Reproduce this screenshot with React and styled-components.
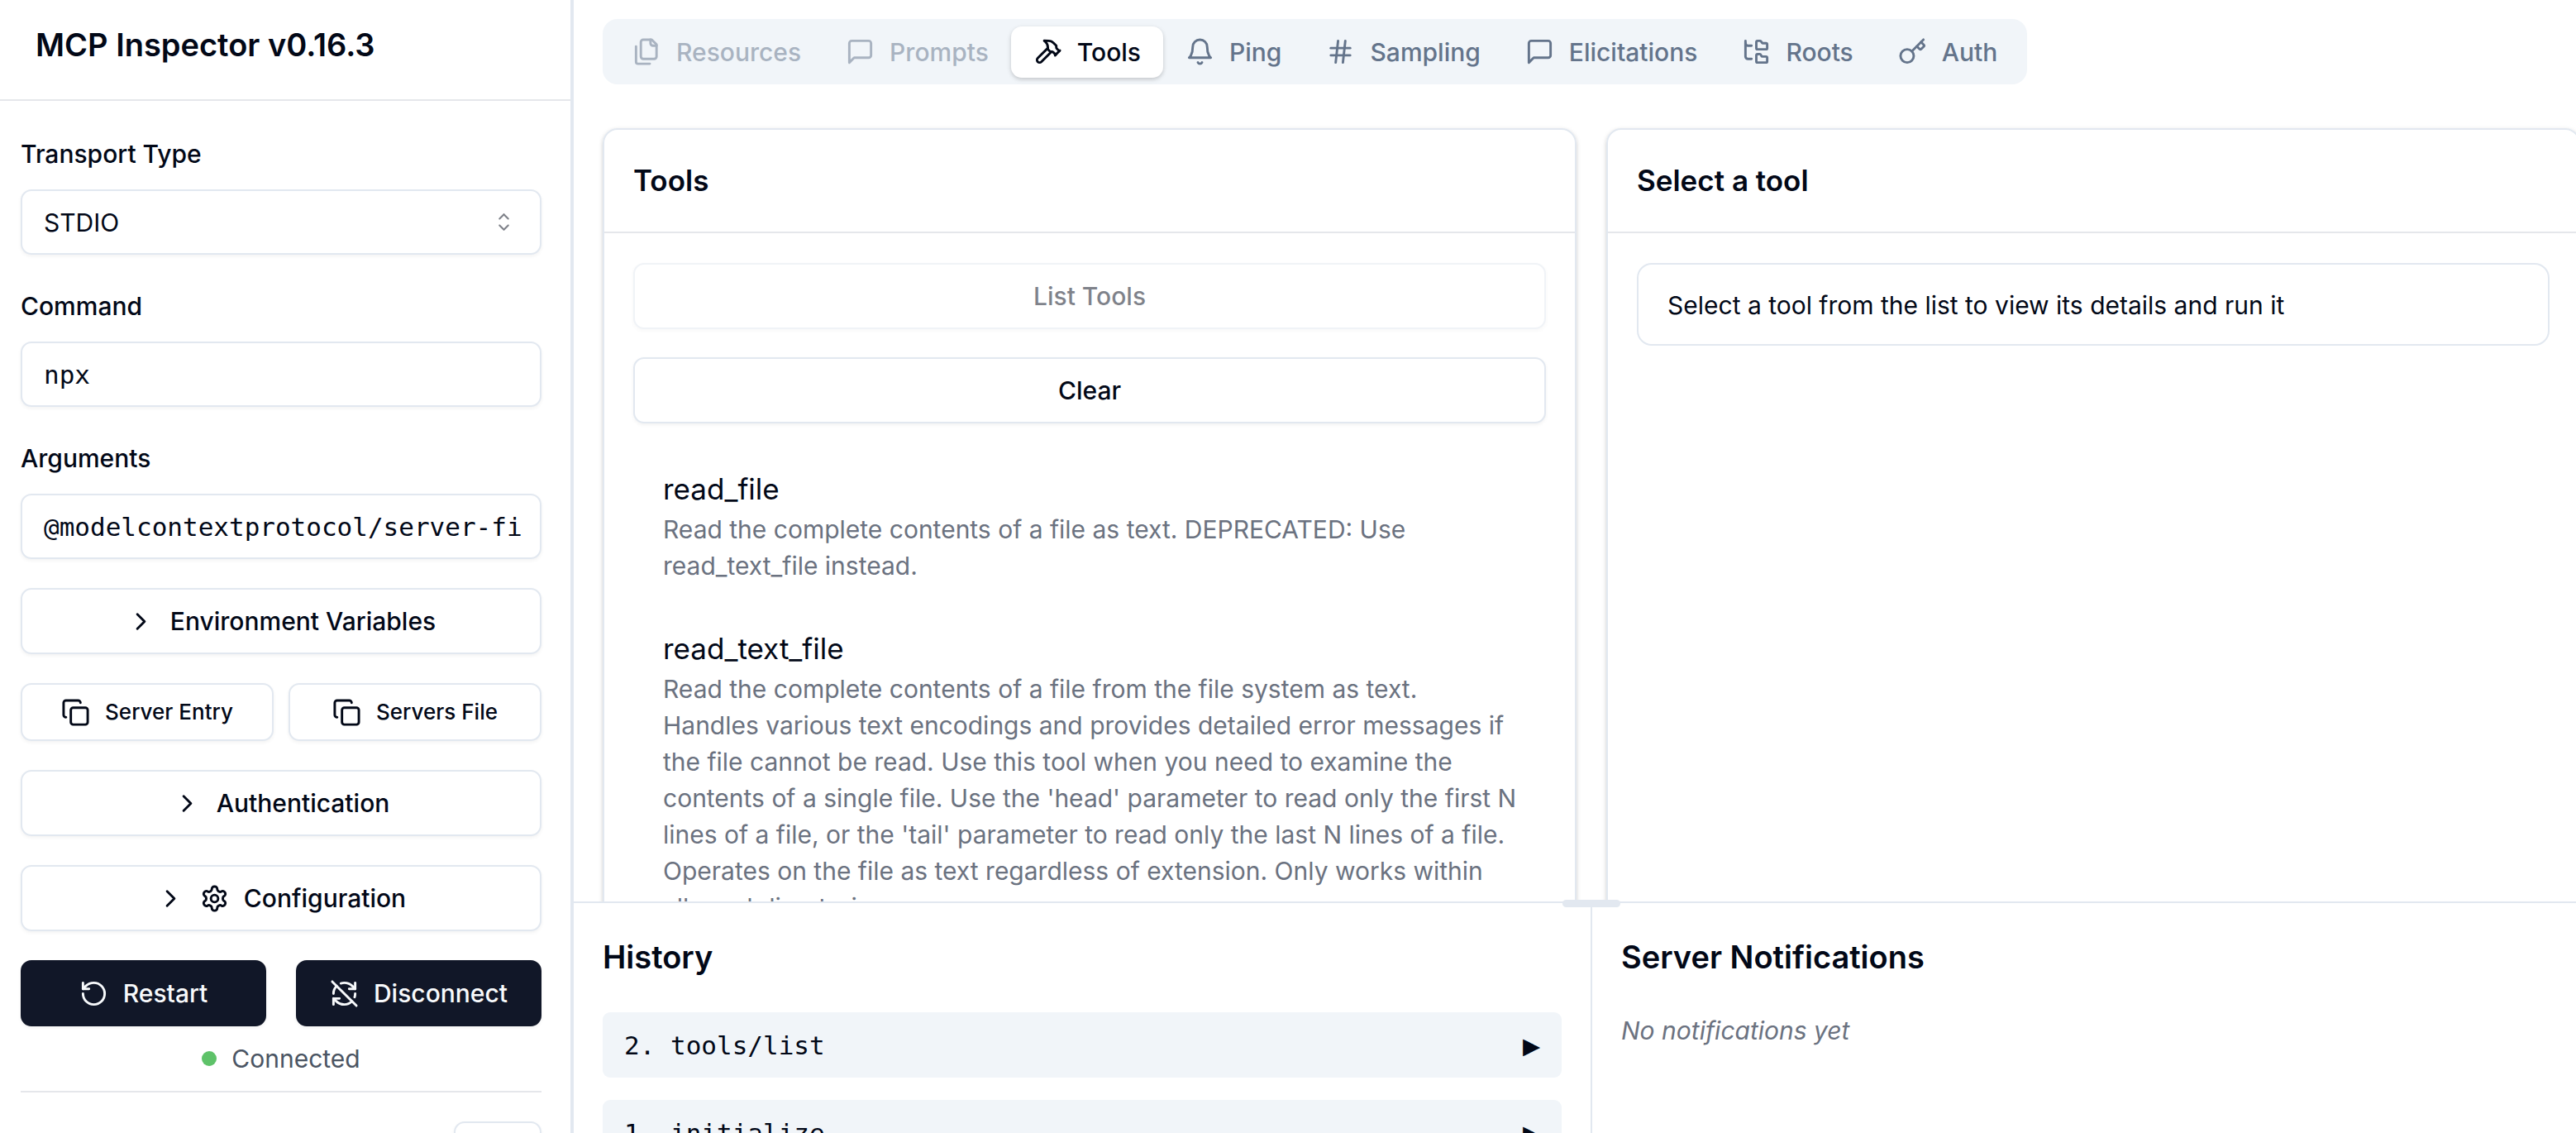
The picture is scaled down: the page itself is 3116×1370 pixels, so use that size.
import React from "react";
import styled, { createGlobalStyle } from "styled-components";

const sans = `Inter, "Liberation Sans", sans-serif`;
const mono = `"DejaVu Sans Mono", "Liberation Mono", monospace`;

const color = {
  ink: "#020817",
  line: "#e2e8f0",
  divider: "#e5e7eb",
  muted: "#64748b",
  gray: "#6b7280",
  soft: "#f1f5f9",
  primary: "#111728",
};

const Global = createGlobalStyle`
  *, *::before, *::after { box-sizing: border-box; }
  body {
    margin: 0;
    background: #fff;
    color: ${color.ink};
    font-family: ${sans};
    font-size: 30px;
    line-height: 44px;
    overflow: hidden;
  }
  h1, h2, h3, p, ul, ol { margin: 0; padding: 0; }
  ul, ol { list-style: none; }
  button, input, select { font: inherit; color: inherit; margin: 0; }
`;

const Page = styled.div`
  display: flex;
  height: 100vh;
  overflow: hidden;
`;

const Sidebar = styled.aside`
  flex: 0 0 694px;
  display: flex;
  flex-direction: column;
  border-right: 4px solid ${color.line};
  overflow: hidden;
`;

const SidebarHeader = styled.header`
  flex: none;
  height: 122px;
  padding: 24px 43px 0;
  border-bottom: 2px solid ${color.divider};
`;

const AppTitle = styled.h1`
  font-size: 38px;
  line-height: 61px;
  font-weight: 600;
`;

const SidebarBody = styled.div`
  flex: none;
  display: flex;
  flex-direction: column;
  gap: 35px;
  padding: 37px 35px 0 25px;
`;

const Field = styled.div`
  display: flex;
  flex-direction: column;
  gap: 15px;
`;

const Label = styled.label`
  font-size: 30px;
  line-height: 55px;
  font-weight: 500;
`;

const boxed = `
  background: #fff;
  border: 2px solid ${color.line};
  border-radius: 13px;
  box-shadow: 0 2px 4px rgba(0, 0, 0, 0.05);
`;

const TextInput = styled.input`
  ${boxed}
  width: 100%;
  height: 79px;
  padding: 0 20px 0 26px;
  font-family: ${mono};
  font-size: 31px;
`;

const SelectWrap = styled.div`
  display: grid;
  align-items: center;
  > * { grid-area: 1 / 1; }
  svg { justify-self: end; margin-right: 28px; opacity: 0.5; pointer-events: none; }
`;

const Select = styled.select`
  ${boxed}
  appearance: none;
  width: 100%;
  height: 79px;
  padding: 0 26px;
`;

const Button = styled.button`
  ${boxed}
  display: inline-flex;
  align-items: center;
  justify-content: center;
  gap: 18px;
  width: ${(p) => (p.$icon ? "106px" : "100%")};
  height: ${(p) => (p.$small ? "70px" : "80px")};
  padding: 0;
  font-size: ${(p) => (p.$small ? "26px" : "30px")};
  font-weight: 500;
  white-space: nowrap;
  ${(p) => p.$primary && `
    background: ${color.primary};
    border-color: ${color.primary};
    color: #f8fafc;
  `}
  &:disabled { opacity: 0.5; }
`;

const ButtonRow = styled.div`
  display: grid;
  grid-template-columns: 1fr 1fr;
  gap: ${(p) => (p.$tight ? "18px" : "36px")};
`;

const Actions = styled.div`
  display: flex;
  flex-direction: column;
  gap: 17px;
`;

const Status = styled.div`
  display: flex;
  align-items: center;
  justify-content: center;
  gap: 18px;
  color: #4b5563;
`;

const Dot = styled.span`
  width: 18px;
  height: 18px;
  border-radius: 50%;
  background: #5ec269;
`;

const SidebarFooter = styled.footer`
  display: flex;
  justify-content: flex-end;
  margin-top: -18px;
  padding-top: 35px;
  border-top: 2px solid ${color.divider};
`;

const Main = styled.main`
  flex: 1;
  min-width: 0;
  display: flex;
  flex-direction: column;
`;

const Workspace = styled.div`
  flex: 1;
  min-height: 0;
  overflow: hidden;
  padding: 23px 0 0 35px;
`;

const Tabs = styled.div`
  display: inline-flex;
  align-items: center;
  height: 79px;
  padding: 0 9px;
  border-radius: 18px;
  background: ${color.soft};
  color: ${color.muted};
`;

const Tab = styled.button`
  display: inline-flex;
  align-items: center;
  gap: 18px;
  height: 62px;
  padding: 0 27px;
  border: 0;
  border-radius: 13px;
  background: ${(p) => (p.$active ? "#fff" : "transparent")};
  color: ${(p) => (p.$active ? color.ink : "inherit")};
  box-shadow: ${(p) => (p.$active ? "0 2px 6px rgba(0, 0, 0, 0.1), 0 2px 4px rgba(0, 0, 0, 0.1)" : "none")};
  font-size: 30px;
  font-weight: 500;
  &:disabled { opacity: 0.5; }
`;

const Cards = styled.div`
  display: grid;
  grid-template-columns: 1fr 1fr;
  align-items: start;
  gap: 36px;
  width: calc(100% + 5px);
  margin-top: 53px;
`;

const Card = styled.section`
  min-height: 100vh;
  border: 2px solid ${color.line};
  border-radius: 18px;
  box-shadow: 0 2px 6px rgba(0, 0, 0, 0.1), 0 2px 4px rgba(0, 0, 0, 0.1);
`;

const CardHeader = styled.div`
  padding: 35px;
  border-bottom: 2px solid ${color.divider};
`;

const CardTitle = styled.h3`
  font-size: 35px;
  line-height: 53px;
  font-weight: 600;
`;

const CardBody = styled.div`
  display: flex;
  flex-direction: column;
  gap: 34px;
  padding: 36px 35px;
`;

const ToolList = styled.ul`
  display: flex;
  flex-direction: column;
  gap: 18px;
`;

const Tool = styled.li`
  padding: 18px 34px 15px 36px;
`;

const ToolName = styled.div`
  font-size: 35px;
  line-height: 54px;
`;

const ToolText = styled.p`
  color: ${color.gray};
`;

const Notice = styled.div`
  padding: 27px 35px 25px;
  border: 2px solid ${color.line};
  border-radius: 18px;
`;

const Bottom = styled.div`
  position: relative;
  flex: none;
  display: grid;
  grid-template-columns: 1232px 1fr;
  height: 280px;
  border-top: 2px solid ${color.line};
`;

const Grip = styled.div`
  position: absolute;
  top: -4px;
  left: 50%;
  width: 70px;
  height: 9px;
  margin-left: -15px;
  border-radius: 5px;
  background: ${color.line};
`;

const Panel = styled.section`
  overflow: hidden;
  padding: 35px;
  border-right: ${(p) => (p.$divided ? `2px solid ${color.line}` : "0")};
`;

const PanelTitle = styled.h2`
  margin-bottom: 36px;
  font-size: 38px;
  line-height: 61px;
  font-weight: 600;
`;

const HistoryList = styled.ul`
  display: flex;
  flex-direction: column;
  gap: 27px;
`;

const HistoryItem = styled.li`
  display: flex;
  align-items: center;
  justify-content: space-between;
  height: 79px;
  padding: 0 26px;
  border-radius: 9px;
  background: ${color.soft};
  font-family: ${mono};
  font-size: 31px;
`;

const Arrow = styled.span`
  font-size: 35px;
`;

const Empty = styled.p`
  color: ${color.gray};
  font-style: italic;
`;

const Svg = styled.svg`
  flex: none;
  width: 35px;
  height: 35px;
`;

const paths = {
  chevron: ["m9 18 6-6-6-6"],
  restart: ["M3 12a9 9 0 1 0 9-9 9.75 9.75 0 0 0-6.74 2.74L3 8", "M3 3v5h5"],
  refreshOff: [
    "M21 8L18.74 5.74A9.75 9.75 0 0 0 12 3C11 3 10.03 3.16 9.13 3.47",
    "M8 16H3v5",
    "M3 12C3 9.51 4 7.26 5.64 5.64",
    "m3 16 2.26 2.26A9.75 9.75 0 0 0 12 21c2.49 0 4.74-1 6.36-2.64",
    "M21 12c0 1-.16 1.97-.47 2.87",
    "M21 3v5h-5",
    "M22 22 2 2",
  ],
  gear: [
    "M12.22 2h-.44a2 2 0 0 0-2 2v.18a2 2 0 0 1-1 1.73l-.43.25a2 2 0 0 1-2 0l-.15-.08a2 2 0 0 0-2.73.73l-.22.38a2 2 0 0 0 .73 2.73l.15.1a2 2 0 0 1 1 1.72v.51a2 2 0 0 1-1 1.74l-.15.09a2 2 0 0 0-.73 2.73l.22.38a2 2 0 0 0 2.73.73l.15-.08a2 2 0 0 1 2 0l.43.25a2 2 0 0 1 1 1.73V20a2 2 0 0 0 2 2h.44a2 2 0 0 0 2-2v-.18a2 2 0 0 1 1-1.73l.43-.25a2 2 0 0 1 2 0l.15.08a2 2 0 0 0 2.73-.73l.22-.39a2 2 0 0 0-.73-2.73l-.15-.08a2 2 0 0 1-1-1.74v-.5a2 2 0 0 1 1-1.74l.15-.09a2 2 0 0 0 .73-2.73l-.22-.38a2 2 0 0 0-2.73-.73l-.15.08a2 2 0 0 1-2 0l-.43-.25a2 2 0 0 1-1-1.73V4a2 2 0 0 0-2-2z",
    "M15 12a3 3 0 1 1-6 0a3 3 0 1 1 6 0",
  ],
  copy: [
    "M10 8h10a2 2 0 0 1 2 2v10a2 2 0 0 1-2 2H10a2 2 0 0 1-2-2V10a2 2 0 0 1 2-2z",
    "M4 16c-1.1 0-2-.9-2-2V4c0-1.1.9-2 2-2h10c1.1 0 2 .9 2 2",
  ],
  files: [
    "M20 7h-3a2 2 0 0 1-2-2V2",
    "M9 18a2 2 0 0 1-2-2V4a2 2 0 0 1 2-2h7l4 4v10a2 2 0 0 1-2 2Z",
    "M3 7.6v12.8A1.6 1.6 0 0 0 4.6 22h9.8",
  ],
  message: ["M21 15a2 2 0 0 1-2 2H7l-4 4V5a2 2 0 0 1 2-2h14a2 2 0 0 1 2 2z"],
  hammer: [
    "m15 12-8.373 8.373a1 1 0 1 1-3-3L12 9",
    "m18 15 4-4",
    "m21.5 11.5-1.914-1.914A2 2 0 0 1 19 8.172V7l-2.26-2.26a6 6 0 0 0-4.202-1.756L9 2.96l.92.82A6.18 6.18 0 0 1 12 8.4V10l2 2h1.172a2 2 0 0 1 1.414.586L18.5 14.5",
  ],
  bell: ["M6 8a6 6 0 0 1 12 0c0 7 3 9 3 9H3s3-2 3-9", "M10.3 21a1.94 1.94 0 0 0 3.4 0"],
  hash: ["M4 9h16", "M4 15h16", "M10 3 8 21", "M16 3l-2 18"],
  tree: [
    "M20 10a1 1 0 0 0 1-1V6a1 1 0 0 0-1-1h-2.5a1 1 0 0 1-.8-.4l-.9-1.2A1 1 0 0 0 15 3h-2a1 1 0 0 0-1 1v5a1 1 0 0 0 1 1Z",
    "M20 21a1 1 0 0 0 1-1v-3a1 1 0 0 0-1-1h-2.9a1 1 0 0 1-.88-.55l-.42-.85a1 1 0 0 0-.92-.6H13a1 1 0 0 0-1 1v5a1 1 0 0 0 1 1Z",
    "M3 5a2 2 0 0 0 2 2h3",
    "M3 3v13a2 2 0 0 0 2 2h3",
  ],
  key: [
    "m15.5 7.5 2.3 2.3a1 1 0 0 0 1.4 0l2.1-2.1a1 1 0 0 0 0-1.4L19 4",
    "m21 2-9.6 9.6",
    "M13 15.5a5.5 5.5 0 1 1-11 0a5.5 5.5 0 1 1 11 0",
  ],
};

const Icon = ({ name }) => (
  <Svg viewBox="0 0 24 24" fill="none" stroke="currentColor" strokeWidth="2" strokeLinecap="round" strokeLinejoin="round" aria-hidden="true">
    {paths[name].map((d) => <path key={d} d={d} />)}
  </Svg>
);

const CaretSort = () => (
  <Svg viewBox="0 0 15 15" fill="none" aria-hidden="true">
    <path
      fill="currentColor"
      fillRule="evenodd"
      d="M4.93179 5.43179C4.75605 5.60753 4.75605 5.89245 4.93179 6.06819C5.10753 6.24392 5.39245 6.24392 5.56819 6.06819L7.49999 4.13638L9.43179 6.06819C9.60753 6.24392 9.89245 6.24392 10.0682 6.06819C10.2439 5.89245 10.2439 5.60753 10.0682 5.43179L7.81819 3.18179C7.73379 3.0974 7.61933 3.04999 7.49999 3.04999C7.38064 3.04999 7.26618 3.0974 7.18179 3.18179L4.93179 5.43179ZM10.0682 9.56819C10.2439 9.39245 10.2439 9.10753 10.0682 8.93179C9.89245 8.75606 9.60753 8.75606 9.43179 8.93179L7.49999 10.8636L5.56819 8.93179C5.39245 8.75606 5.10753 8.75606 4.93179 8.93179C4.75605 9.10753 4.75605 9.39245 4.93179 9.56819L7.18179 11.8182C7.35753 11.9939 7.64245 11.9939 7.81819 11.8182L10.0682 9.56819Z"
    />
  </Svg>
);

const tabs = [
  { name: "Resources", icon: "files", disabled: true },
  { name: "Prompts", icon: "message", disabled: true },
  { name: "Tools", icon: "hammer" },
  { name: "Ping", icon: "bell" },
  { name: "Sampling", icon: "hash" },
  { name: "Elicitations", icon: "message" },
  { name: "Roots", icon: "tree" },
  { name: "Auth", icon: "key" },
];

const tools = [
  {
    name: "read_file",
    text: "Read the complete contents of a file as text. DEPRECATED: Use read_text_file instead.",
  },
  {
    name: "read_text_file",
    text: "Read the complete contents of a file from the file system as text. Handles various text encodings and provides detailed error messages if the file cannot be read. Use this tool when you need to examine the contents of a single file. Use the 'head' parameter to read only the first N lines of a file, or the 'tail' parameter to read only the last N lines of a file. Operates on the file as text regardless of extension. Only works within allowed directories.",
  },
];

const history = ["2. tools/list", "1. initialize"];

export default function App() {
  const [tab, setTab] = React.useState("Tools");
  return (
    <Page>
      <Global />
      <Sidebar>
        <SidebarHeader>
          <AppTitle>MCP Inspector v0.16.3</AppTitle>
        </SidebarHeader>
        <SidebarBody>
          <Field>
            <Label htmlFor="transport">Transport Type</Label>
            <SelectWrap>
              <Select id="transport" defaultValue="STDIO">
                <option>STDIO</option>
              </Select>
              <CaretSort />
            </SelectWrap>
          </Field>
          <Field>
            <Label htmlFor="command">Command</Label>
            <TextInput id="command" defaultValue="npx" />
          </Field>
          <Field>
            <Label htmlFor="arguments">Arguments</Label>
            <TextInput id="arguments" defaultValue="@modelcontextprotocol/server-fi" />
          </Field>
          <Button type="button"><Icon name="chevron" />Environment Variables</Button>
          <ButtonRow $tight>
            <Button type="button" $small><Icon name="copy" />Server Entry</Button>
            <Button type="button" $small><Icon name="copy" />Servers File</Button>
          </ButtonRow>
          <Button type="button"><Icon name="chevron" />Authentication</Button>
          <Button type="button"><Icon name="chevron" /><Icon name="gear" />Configuration</Button>
          <Actions>
            <ButtonRow>
              <Button type="button" $primary><Icon name="restart" />Restart</Button>
              <Button type="button" $primary><Icon name="refreshOff" />Disconnect</Button>
            </ButtonRow>
            <Status><Dot />Connected</Status>
          </Actions>
          <SidebarFooter>
            <Button type="button" $icon aria-label="Theme" />
          </SidebarFooter>
        </SidebarBody>
      </Sidebar>
      <Main>
        <Workspace>
          <Tabs role="tablist">
            {tabs.map((t) => (
              <Tab
                key={t.name}
                type="button"
                role="tab"
                disabled={t.disabled}
                aria-selected={tab === t.name}
                $active={tab === t.name}
                onClick={() => setTab(t.name)}
              >
                <Icon name={t.icon} />
                {t.name}
              </Tab>
            ))}
          </Tabs>
          <Cards>
            <Card>
              <CardHeader><CardTitle>Tools</CardTitle></CardHeader>
              <CardBody>
                <Button type="button" disabled>List Tools</Button>
                <Button type="button">Clear</Button>
                <ToolList>
                  {tools.map((t) => (
                    <Tool key={t.name}>
                      <ToolName>{t.name}</ToolName>
                      <ToolText>{t.text}</ToolText>
                    </Tool>
                  ))}
                </ToolList>
              </CardBody>
            </Card>
            <Card>
              <CardHeader><CardTitle>Select a tool</CardTitle></CardHeader>
              <CardBody>
                <Notice>Select a tool from the list to view its details and run it</Notice>
              </CardBody>
            </Card>
          </Cards>
        </Workspace>
        <Bottom>
          <Grip />
          <Panel $divided>
            <PanelTitle>History</PanelTitle>
            <HistoryList>
              {history.map((h) => (
                <HistoryItem key={h}><span>{h}</span><Arrow>▶</Arrow></HistoryItem>
              ))}
            </HistoryList>
          </Panel>
          <Panel>
            <PanelTitle>Server Notifications</PanelTitle>
            <Empty>No notifications yet</Empty>
          </Panel>
        </Bottom>
      </Main>
    </Page>
  );
}
